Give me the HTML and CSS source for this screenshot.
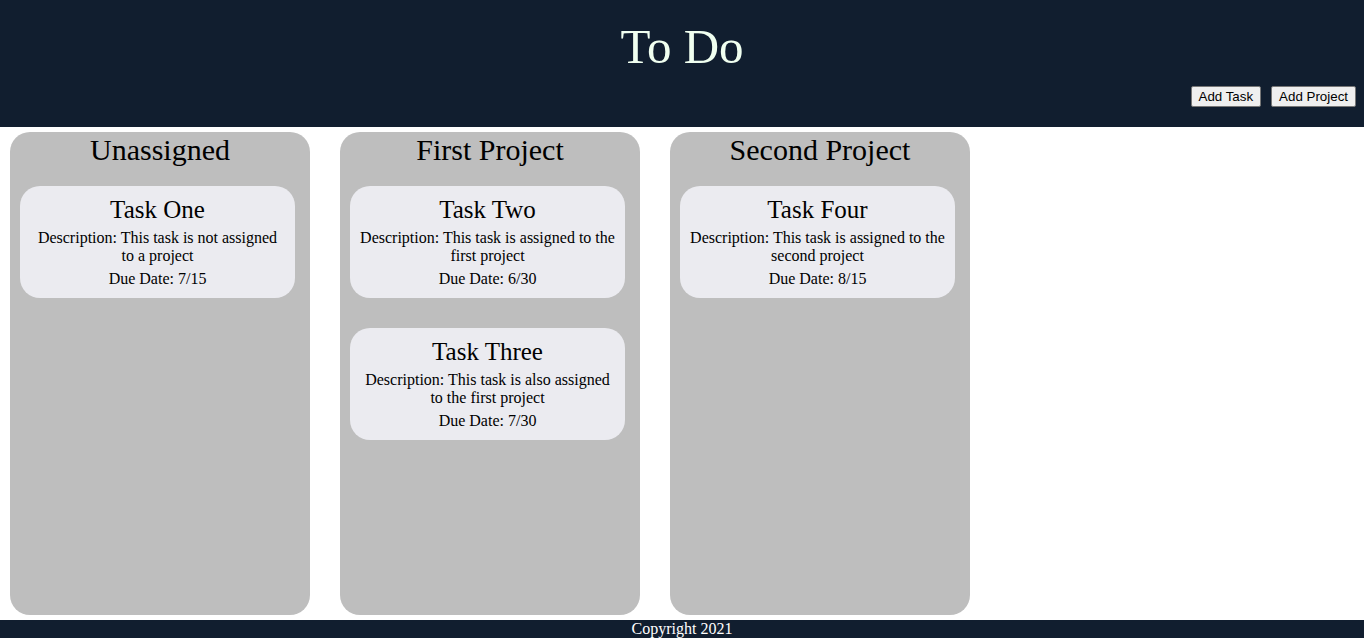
FILE: index.html
```html
<!DOCTYPE html>
<html>
<head>
<meta charset="utf-8">
<title>To Do</title>
<link rel="stylesheet" href="styles.css">
</head>
<body>
<header class="site-header">
  <h1 class="site-title">To Do</h1>
  <div class="actions">
    <button class="btn">Add Task</button>
    <button class="btn">Add Project</button>
  </div>
</header>
<main class="board">
  <section class="project">
    <h2 class="project-title">Unassigned</h2>
    <div class="task">
      <h3 class="task-title">Task One</h3>
      <p class="task-text">Description: This task is not assigned to a project</p>
      <p class="task-text task-due">Due Date: 7/15</p>
    </div>
  </section>
  <section class="project">
    <h2 class="project-title">First Project</h2>
    <div class="task">
      <h3 class="task-title">Task Two</h3>
      <p class="task-text">Description: This task is assigned to the first project</p>
      <p class="task-text task-due">Due Date: 6/30</p>
    </div>
    <div class="task">
      <h3 class="task-title">Task Three</h3>
      <p class="task-text">Description: This task is also assigned to the first project</p>
      <p class="task-text task-due">Due Date: 7/30</p>
    </div>
  </section>
  <section class="project">
    <h2 class="project-title">Second Project</h2>
    <div class="task">
      <h3 class="task-title">Task Four</h3>
      <p class="task-text">Description: This task is assigned to the second project</p>
      <p class="task-text task-due">Due Date: 8/15</p>
    </div>
  </section>
</main>
<footer class="site-footer">Copyright 2021</footer>
</body>
</html>
```
FILE: styles.css
```css
html, body {
  margin: 0;
  padding: 0;
  height: 100%;
}
body {
  display: flex;
  flex-direction: column;
  font-family: "Liberation Serif", "Times New Roman", serif;
  color: #000;
  background: #fff;
  overflow: hidden;
}
.site-header {
  background: #111e2f;
  color: #f0fff0;
  height: 127px;
  box-sizing: border-box;
}
.site-title {
  margin: 20px 0 13px;
  font-size: 49px;
  font-weight: normal;
  text-align: center;
  line-height: 53px;
}
.actions {
  display: flex;
  justify-content: flex-end;
  gap: 10px;
  padding: 0 8px;
}
.btn {
  font-family: "Liberation Sans", Arial, sans-serif;
  font-size: 13.333px;
  color: #000;
  background: #efefef;
  border: 1px solid #767676;
  border-radius: 2px;
  padding: 1px 7px;
  height: 21px;
  line-height: 15px;
}
.board {
  flex: 1;
  display: flex;
  gap: 30px;
  padding: 5px 10px;
  min-height: 0;
}
.project {
  width: 300px;
  background: #bebebe;
  border-radius: 20px;
  padding: 0 10px;
  box-sizing: border-box;
  display: flex;
  flex-direction: column;
  gap: 30px;
}
.project-title {
  margin: 0 0 -11px;
  font-size: 30px;
  font-weight: normal;
  text-align: center;
  line-height: 35px;
}
.task {
  width: 275px;
  box-sizing: border-box;
  background: #ebebf0;
  border-radius: 20px;
  padding: 10px 10px 10px;
  text-align: center;
  display: flex;
  flex-direction: column;
  gap: 4px;
}
.task-title {
  margin: 0 0 1px;
  font-size: 25px;
  font-weight: normal;
  line-height: 28px;
}
.task-text {
  margin: 0;
  font-size: 16px;
  line-height: 18px;
}
.task-due {
  margin-top: 1px;
}
.site-footer {
  background: #111e2f;
  color: #fff;
  height: 18px;
  text-align: center;
  font-size: 16px;
  line-height: 18px;
}
```
